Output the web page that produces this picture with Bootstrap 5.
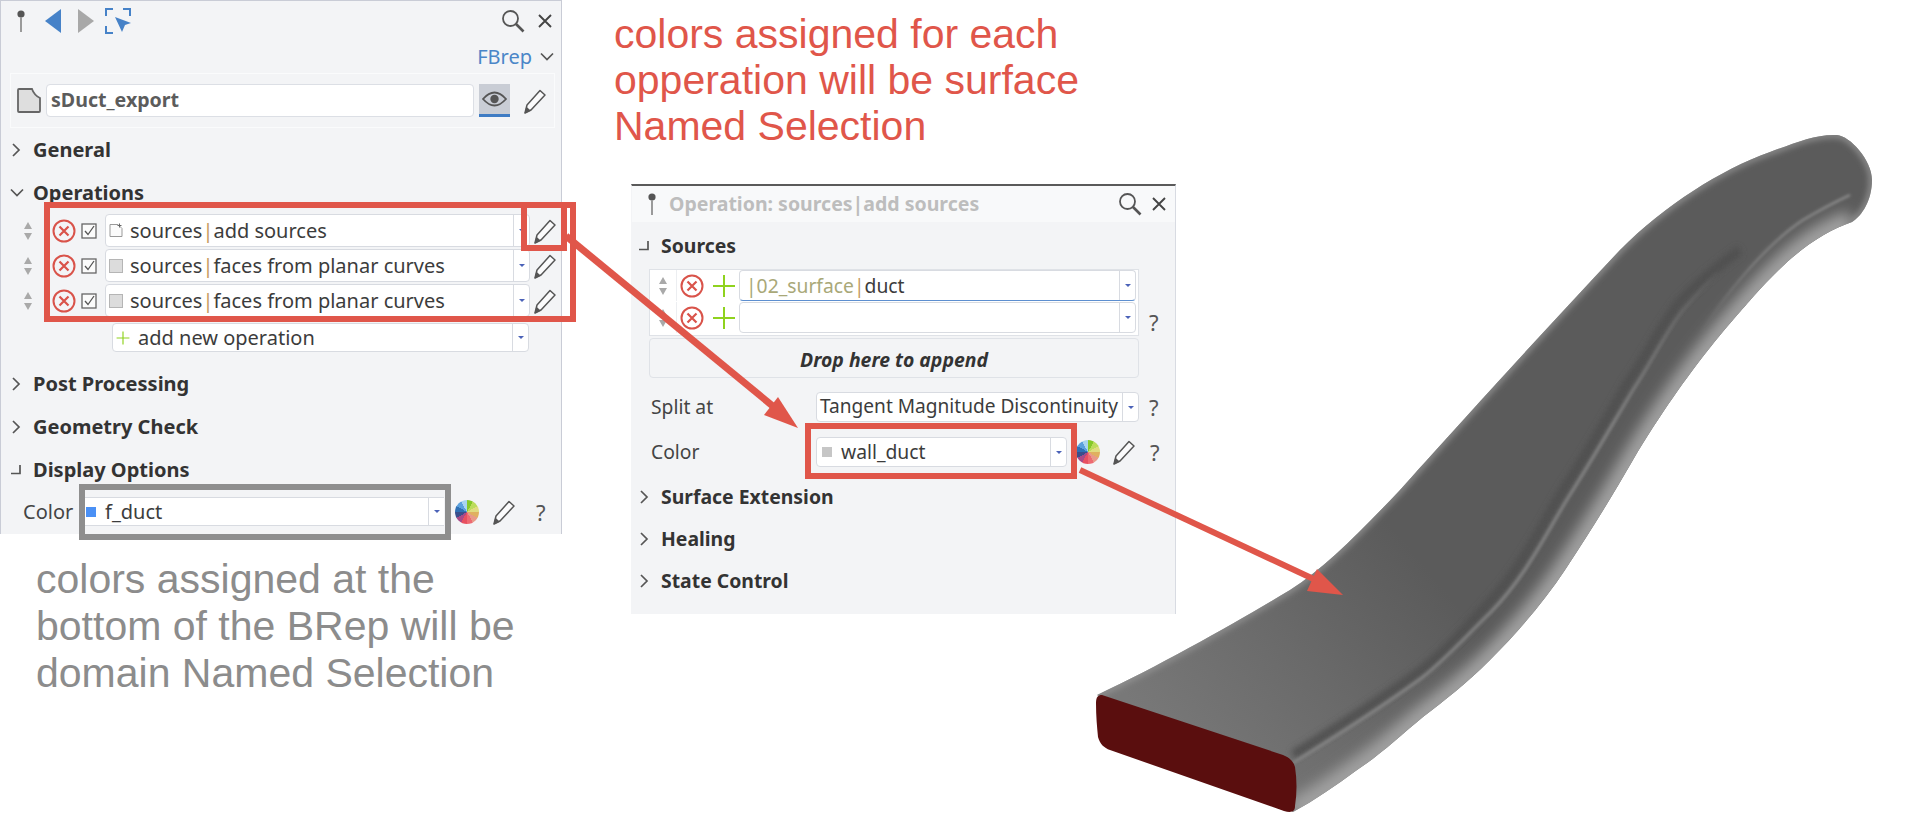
<!DOCTYPE html>
<html lang="en">
  <head>
    <meta charset="UTF-8" />
    <title>Named Selection colors</title>
    <link href="https://cdn.jsdelivr.net/npm/bootstrap@5.3.0/dist/css/bootstrap.min.css" rel="stylesheet" />
    <script src="https://cdn.jsdelivr.net/npm/bootstrap@5.3.0/dist/js/bootstrap.bundle.min.js"></script>
    <style>
      body { background: #fff; overflow: hidden; font-family: "Noto Sans", sans-serif; color: #3c3c3c; }
      .canvas { position: relative; width: 1925px; height: 836px; overflow: hidden; }
      .prop-panel { background: #f3f4f6; border-left: 1px solid #c9ccd6; border-right: 1px solid #c9ccd6; }
      .panel-left { position: absolute; left: 0; top: 0; width: 562px; height: 534px; border-top: 1px solid #c9ccd6; }
      .panel-right { position: absolute; left: 631px; top: 184px; width: 545px; height: 430px; border-top: 2px solid #5a5a5a; border-left-color: #f3f4f6; border-right-color: #d8dbe2; }

      .tool-row { height: 39px; padding: 0 8px 0 13px; }
      .type-row { height: 33px; padding-right: 7px; color: #4a86c8; font-size: 20px; }
      .name-box { height: 55px; margin: 0 6px 0 9px; border: 1px solid #fafbfc; padding: 0 0 0 6px; }
      .name-field { width: 428px; height: 33px; margin-left: 5px; padding: 0 0 0 4px; font-size: 19.6px; font-weight: 700; color: #5c5c5c; border: 1px solid #dcdfe5; border-radius: 4px; line-height: 30px; }
      .eye-btn { width: 31px; height: 33px; margin-left: 5px; background: #c9cdd5; border-bottom: 3px solid #3f7cc4; }
      .sec-head { height: 43px; padding-left: 9px; font-weight: 700; font-size: 20px; color: #333; }
      .sec-head svg { margin-right: 11px; }
      .panel-right .sec-head { height: 42px; padding-left: 6px; font-size: 19.4px; }
      .panel-right .sec-head svg { margin-right: 11px; }

      .op-row { height: 33px; margin-bottom: 2px; padding-left: 21px; }
      .combo { height: 100%; background: #fff; border: 1px solid #d8dbe1; border-radius: 4px; font-size: 20px; line-height: 1; }
      .panel-right .combo { font-size: 19.3px; }
      .panel-right .combo .split-text { font-size: 19.1px; padding-left: 3px; }
      .combo-text { flex: 1 1 auto; min-width: 0; padding-left: 3px; white-space: nowrap; }
      .combo-drop { flex: 0 0 16px; height: 100%; border-left: 1px solid #d8dbe1; }
      .combo-caret { width: 0; height: 0; border-left: 3px solid transparent; border-right: 3px solid transparent; border-top: 3px solid #4b62b8; }
      .sep { color: #c59a5e; }
      .swatch { width: 14px; height: 14px; background: #dcdcdc; border: 1px solid #b5b5b5; margin-right: 7px; }
      .sq-blue { width: 10px; height: 10px; background: #4a90f5; margin-right: 9px; }
      .sq-grey { width: 10px; height: 10px; background: #c6c6c6; margin-right: 9px; }
      .color-wheel { width: 24px; height: 24px; border-radius: 50%; background: conic-gradient(#85c92a 0 30deg, #bcdc5c 30deg 60deg, #e0dc80 60deg 90deg, #e0b060 90deg 120deg, #e89a88 120deg 150deg, #ee6a72 150deg 180deg, #e85060 180deg 210deg, #a84a88 210deg 240deg, #3a4f8c 240deg 270deg, #2f70b4 270deg 300deg, #5aa0dc 300deg 330deg, #a8d4ee 330deg 360deg); }
      .help-mark { font-size: 22px; color: #555; line-height: 1; }
      .field-label { font-size: 20px; color: #444; }
      .panel-right .field-label { font-size: 19.3px; }

      .panel-head { height: 36px; background: #f8f9fa; padding: 0 8px 0 13px; color: #bdbdbd; font-weight: 700; font-size: 19.5px; }
      .src-list { width: 490px; height: 67px; margin: 2px 0 0 17px; background: #fff; border: 1px solid #dfe2e7; }
      .src-row { height: 31px; margin-bottom: 1px; }
      .spin-cell { width: 27px; height: 100%; border-right: 1px solid #eceef1; }
      .drop-box { width: 490px; height: 40px; margin: 2px 0 0 17px; padding-top: 3px; border: 1px solid #dfe2e7; border-radius: 4px; font-weight: 700; font-style: italic; font-size: 19.4px; color: #333; }
      .field-row { height: 30px; padding-left: 19px; }
      .float-note { position: absolute; font-family: "Liberation Sans", Arial, sans-serif; font-size: 41px; white-space: nowrap; }
      .note-red { left: 614px; top: 11px; line-height: 46px; color: #e0564a; }
      .note-grey { left: 36px; top: 556px; line-height: 47px; color: #8c8c8c; }
      .duct-shape { position: absolute; left: 1060px; top: 110px; }
      .mark-layer { position: absolute; left: 0; top: 0; pointer-events: none; }
    </style>
  </head>
  <body>
    <svg class="d-none">
      <symbol id="i-pin" viewBox="0 0 14 24"><circle cx="7" cy="5" r="3.6" fill="#555"/><rect x="6" y="8" width="2" height="15" fill="#9a9a9a"/></symbol>
      <symbol id="i-search" viewBox="0 0 26 26"><circle cx="10.5" cy="10.5" r="7.5" fill="none" stroke="#555" stroke-width="1.8"/><path d="M16 16l7.5 7.5" stroke="#555" stroke-width="2.6"/></symbol>
      <symbol id="i-x" viewBox="0 0 16 16"><path d="M2 2l12 12M14 2L2 14" stroke="#444" stroke-width="1.9"/></symbol>
      <symbol id="i-pencil" viewBox="0 0 24 26"><path d="M2 25l2-8L17 2.500l5 4.500L8 22z" fill="#fbfbfc" stroke="#555" stroke-width="1.500" stroke-linejoin="round"/><path d="M1.500 25.500l1.800-7 4.500 4.200z" fill="#555"/></symbol>
      <symbol id="i-close" viewBox="0 0 24 24"><circle cx="12" cy="12" r="10.500" fill="none" stroke="#d9534a" stroke-width="2"/><path d="M7.500 7.500l9 9M16.500 7.500l-9 9" stroke="#d9534a" stroke-width="2.200"/></symbol>
      <symbol id="i-spin" viewBox="0 0 10 18"><path d="M5 0l4 7H1zM5 18l-4-7h8z" fill="#a9a9a9"/></symbol>
      <symbol id="i-check" viewBox="0 0 16 16"><rect x="1" y="1" width="14" height="14" fill="#fbfbfb" stroke="#666" stroke-width="1.300"/><path d="M4 8l3 3.500L13 3" fill="none" stroke="#555" stroke-width="1.300"/></symbol>
      <symbol id="i-plus" viewBox="0 0 24 24"><path d="M12 1v22M1 12h22" stroke="#8fd21e" stroke-width="2"/></symbol>
      <symbol id="i-right" viewBox="0 0 12 16"><path d="M3 2l6 6-6 6" fill="none" stroke="#555" stroke-width="1.700"/></symbol>
      <symbol id="i-down" viewBox="0 0 14 12"><path d="M1 2.500l6 6 6-6" fill="none" stroke="#555" stroke-width="1.700"/></symbol>
      <symbol id="i-open" viewBox="0 0 12 16"><path d="M1 11.500h9V3" fill="none" stroke="#555" stroke-width="1.700"/></symbol>
      <symbol id="i-new" viewBox="0 0 14 14"><path d="M1 1h8l4 4v8H1z" fill="#fbfbfb" stroke="#999"/><path d="M10.500 0v4M8.500 2h4" stroke="#666"/></symbol>
    </svg>

    <div class="canvas">
      <!-- left panel -->
      <div class="prop-panel panel-left d-flex flex-column">
        <div class="tool-row d-flex align-items-center">
          <svg width="14" height="24"><use href="#i-pin"/></svg>
          <svg class="ms-3" width="18" height="26" viewBox="0 0 18 26"><path d="M17 1v24L1 13z" fill="#4682c8"/></svg>
          <svg width="18" height="26" viewBox="0 0 18 26" style="margin-left:15px"><path d="M1 1v24l16-12z" fill="#a8a8a8"/></svg>
          <svg width="26" height="26" viewBox="0 0 26 26" style="margin-left:10px"><path d="M1 8V1h7M18 1h7v7M1 18v7h7" fill="none" stroke="#4682c8" stroke-width="2"/><path d="M10 9l16 6-6 2-3 7z" fill="#4682c8"/></svg>
          <svg class="ms-auto" width="26" height="26"><use href="#i-search"/></svg>
          <svg width="16" height="16" style="margin-left:11px"><use href="#i-x"/></svg>
        </div>
        <div class="type-row d-flex align-items-center justify-content-end">
          <span>FBrep</span>
          <svg class="ms-2" width="14" height="12"><use href="#i-down"/></svg>
        </div>
        <div class="name-box d-flex align-items-center">
          <svg width="24" height="25" viewBox="0 0 24 25"><path d="M2 1h13q2 6 8 9v13q0 1-1 1H2q-1 0-1-1V2q0-1 1-1z" fill="#dedede" stroke="#666" stroke-width="1.800"/></svg>
          <div class="name-field form-control">sDuct_export</div>
          <div class="eye-btn d-flex align-items-center justify-content-center">
            <svg width="25" height="16" viewBox="0 0 25 16"><path d="M1 8q11.500-13 23 0q-11.500 13-23 0z" fill="none" stroke="#555" stroke-width="1.800"/><circle cx="12.500" cy="8" r="4.200" fill="#555"/></svg>
          </div>
          <svg class="ms-auto" width="24" height="26" style="margin-right:7px"><use href="#i-pencil"/></svg>
        </div>
        <div class="sec-head d-flex align-items-center"><svg width="12" height="16"><use href="#i-right"/></svg>General</div>
        <div class="sec-head d-flex align-items-center"><svg width="14" height="12" style="margin-right:9px"><use href="#i-down"/></svg>Operations</div>

        <div class="op-row d-flex align-items-center">
          <svg width="12" height="18"><use href="#i-spin"/></svg>
          <svg width="24" height="24" style="margin-left:18px"><use href="#i-close"/></svg>
          <svg width="16" height="16" style="margin-left:5px"><use href="#i-check"/></svg>
          <div class="combo d-flex align-items-center" style="width:425px;margin-left:8px">
            <div class="combo-text d-flex align-items-center"><svg width="14" height="15" style="margin-right:7px"><use href="#i-new"/></svg>sources<span class="sep">|</span>add sources</div>
            <div class="combo-drop d-flex align-items-center justify-content-center"><div class="combo-caret"></div></div>
          </div>
          <svg width="24" height="26" style="margin-left:3px"><use href="#i-pencil"/></svg>
        </div>
        <div class="op-row d-flex align-items-center">
          <svg width="12" height="18"><use href="#i-spin"/></svg>
          <svg width="24" height="24" style="margin-left:18px"><use href="#i-close"/></svg>
          <svg width="16" height="16" style="margin-left:5px"><use href="#i-check"/></svg>
          <div class="combo d-flex align-items-center" style="width:425px;margin-left:8px">
            <div class="combo-text d-flex align-items-center"><div class="swatch"></div>sources<span class="sep">|</span>faces from planar curves</div>
            <div class="combo-drop d-flex align-items-center justify-content-center"><div class="combo-caret"></div></div>
          </div>
          <svg width="24" height="26" style="margin-left:3px"><use href="#i-pencil"/></svg>
        </div>
        <div class="op-row d-flex align-items-center">
          <svg width="12" height="18"><use href="#i-spin"/></svg>
          <svg width="24" height="24" style="margin-left:18px"><use href="#i-close"/></svg>
          <svg width="16" height="16" style="margin-left:5px"><use href="#i-check"/></svg>
          <div class="combo d-flex align-items-center" style="width:425px;margin-left:8px">
            <div class="combo-text d-flex align-items-center"><div class="swatch"></div>sources<span class="sep">|</span>faces from planar curves</div>
            <div class="combo-drop d-flex align-items-center justify-content-center"><div class="combo-caret"></div></div>
          </div>
          <svg width="24" height="26" style="margin-left:3px"><use href="#i-pencil"/></svg>
        </div>
        <div class="combo d-flex align-items-center flex-shrink-0" style="width:417px;height:29px;margin:4px 0 10px 111px">
          <div class="combo-text d-flex align-items-center"><svg width="14" height="14" style="margin-right:8px"><use href="#i-plus"/></svg>add new operation</div>
          <div class="combo-drop d-flex align-items-center justify-content-center"><div class="combo-caret"></div></div>
        </div>

        <div class="sec-head d-flex align-items-center"><svg width="12" height="16"><use href="#i-right"/></svg>Post Processing</div>
        <div class="sec-head d-flex align-items-center"><svg width="12" height="16"><use href="#i-right"/></svg>Geometry Check</div>
        <div class="sec-head d-flex align-items-center"><svg width="12" height="16"><use href="#i-open"/></svg>Display Options</div>
        <div class="d-flex align-items-center" style="height:29px;margin-top:6px;padding-left:22px">
          <span class="field-label" style="width:62px">Color</span>
          <div class="combo d-flex align-items-center rounded-0 border-start-0 border-end-0" style="width:359px">
            <div class="combo-text d-flex align-items-center" style="padding-left:1px"><div class="sq-blue"></div>f_duct</div>
            <div class="combo-drop d-flex align-items-center justify-content-center"><div class="combo-caret"></div></div>
          </div>
          <div class="color-wheel flex-shrink-0" style="margin-left:11px"></div>
          <svg width="24" height="26" style="margin-left:13px"><use href="#i-pencil"/></svg>
          <span class="help-mark" style="margin-left:20px">?</span>
        </div>
      </div>

      <!-- right panel -->
      <div class="prop-panel panel-right d-flex flex-column">
        <div class="panel-head d-flex align-items-center">
          <svg width="14" height="24"><use href="#i-pin"/></svg>
          <span style="margin-left:10px">Operation: sources|add sources</span>
          <svg class="ms-auto" width="26" height="26"><use href="#i-search"/></svg>
          <svg class="ms-2" width="16" height="16"><use href="#i-x"/></svg>
        </div>
        <div class="sec-head d-flex align-items-center" style="margin-top:3px"><svg width="12" height="16"><use href="#i-open"/></svg>Sources</div>
        <div class="d-flex">
          <div class="src-list">
            <div class="src-row d-flex align-items-center">
              <div class="spin-cell d-flex align-items-center justify-content-center"><svg width="10" height="18"><use href="#i-spin"/></svg></div>
              <svg width="24" height="24" style="margin-left:3px"><use href="#i-close"/></svg>
              <svg width="24" height="24" style="margin-left:8px"><use href="#i-plus"/></svg>
              <div class="combo d-flex align-items-center" style="width:397px;margin-left:3px;border-bottom-color:#5d8fd0">
                <div class="combo-text" style="padding-left:6px"><span style="color:#a9a878">|02_surface</span><span class="sep">|</span>duct</div>
                <div class="combo-drop d-flex align-items-center justify-content-center"><div class="combo-caret"></div></div>
              </div>
            </div>
            <div class="src-row d-flex align-items-center">
              <div class="spin-cell d-flex align-items-center justify-content-center"><svg width="10" height="18"><use href="#i-spin"/></svg></div>
              <svg width="24" height="24" style="margin-left:3px"><use href="#i-close"/></svg>
              <svg width="24" height="24" style="margin-left:8px"><use href="#i-plus"/></svg>
              <div class="combo d-flex align-items-center" style="width:397px;margin-left:3px">
                <div class="combo-text"></div>
                <div class="combo-drop d-flex align-items-center justify-content-center"><div class="combo-caret"></div></div>
              </div>
            </div>
          </div>
          <span class="help-mark align-self-end" style="margin:0 0 3px 10px">?</span>
        </div>
        <div class="drop-box d-flex align-items-center justify-content-center">Drop here to append</div>
        <div class="field-row d-flex align-items-center" style="margin-top:14px">
          <span class="field-label" style="width:165px">Split at</span>
          <div class="combo d-flex align-items-center" style="width:323px">
            <div class="combo-text split-text">Tangent Magnitude Discontinuity</div>
            <div class="combo-drop d-flex align-items-center justify-content-center"><div class="combo-caret"></div></div>
          </div>
          <span class="help-mark" style="margin-left:10px">?</span>
        </div>
        <div class="field-row d-flex align-items-center" style="margin-top:15px">
          <span class="field-label" style="width:165px">Color</span>
          <div class="combo d-flex align-items-center" style="width:251px">
            <div class="combo-text d-flex align-items-center" style="padding-left:5px"><div class="sq-grey"></div>wall_duct</div>
            <div class="combo-drop d-flex align-items-center justify-content-center"><div class="combo-caret"></div></div>
          </div>
          <div class="color-wheel flex-shrink-0" style="margin-left:9px"></div>
          <svg width="24" height="26" style="margin-left:12px"><use href="#i-pencil"/></svg>
          <span class="help-mark" style="margin-left:14px">?</span>
        </div>
        <div class="sec-head d-flex align-items-center" style="margin-top:9px"><svg width="12" height="16"><use href="#i-right"/></svg>Surface Extension</div>
        <div class="sec-head d-flex align-items-center"><svg width="12" height="16"><use href="#i-right"/></svg>Healing</div>
        <div class="sec-head d-flex align-items-center"><svg width="12" height="16"><use href="#i-right"/></svg>State Control</div>
      </div>

      <!-- notes -->
      <div class="float-note note-red">colors assigned for each<br />opperation will be surface<br />Named Selection</div>
      <div class="float-note note-grey">colors assigned at the<br />bottom of the BRep will be<br />domain Named Selection</div>

      <!-- duct model -->
      <svg class="duct-shape" width="830" height="710" viewBox="1060 110 830 710">
        <defs>
          <linearGradient id="ductBase" gradientUnits="userSpaceOnUse" x1="1180" y1="760" x2="1420" y2="560">
            <stop offset="0" stop-color="#787878"/>
            <stop offset="0.5" stop-color="#6a6a6a"/>
            <stop offset="1" stop-color="#5b5b5b"/>
          </linearGradient>
          <linearGradient id="ridgeLow" gradientUnits="userSpaceOnUse" x1="1293" y1="763" x2="1730" y2="260">
            <stop offset="0" stop-color="#858585"/>
            <stop offset="0.7" stop-color="#858585"/>
            <stop offset="1" stop-color="#858585" stop-opacity="0"/>
          </linearGradient>
          <linearGradient id="ridgeHigh" gradientUnits="userSpaceOnUse" x1="1850" y1="195" x2="1700" y2="333">
            <stop offset="0" stop-color="#a4a4a4"/>
            <stop offset="0.6" stop-color="#a4a4a4" stop-opacity="0.7"/>
            <stop offset="1" stop-color="#a4a4a4" stop-opacity="0"/>
          </linearGradient>
          <filter id="blur8" x="-10%" y="-10%" width="120%" height="120%"><feGaussianBlur stdDeviation="7"/></filter>
          <filter id="blur3" x="-10%" y="-10%" width="120%" height="120%"><feGaussianBlur stdDeviation="3"/></filter>
          <filter id="blur1" x="-10%" y="-10%" width="120%" height="120%"><feGaussianBlur stdDeviation="1.500"/></filter>
          <clipPath id="ductClip"><path d="M1097 695C1165 663 1240 620 1290 590C1325 568 1360 532 1400 490C1450 434 1540 335 1620 250C1665 205 1720 170 1770 152C1795 143 1815 134 1837 135C1850 136 1872 160 1872 180C1872 200 1862 216 1852 222C1820 233 1790 255 1753 297C1735 318 1690 365 1633 460C1610 500 1590 532 1565 570C1545 600 1520 630 1490 660C1465 685 1445 700 1423 717C1400 736 1380 755 1357 770C1335 786 1315 800 1293 812Z"/></clipPath>
        </defs>
        <g clip-path="url(#ductClip)">
          <rect x="1060" y="110" width="830" height="710" fill="url(#ductBase)"/>
          <!-- lighter outer strip along the lower edge -->
          <path d="M1293 812C1315 800 1335 786 1357 770C1380 755 1400 736 1423 717C1445 700 1465 685 1490 660C1520 630 1545 600 1565 570C1590 532 1610 500 1633 460C1690 365 1735 318 1753 297C1790 255 1820 233 1852 222" fill="none" stroke="#a0a0a0" stroke-width="24" filter="url(#blur8)"/>
          <!-- dark band above the ridge -->
          <path d="M1293 755C1335 729 1385 697 1423 669C1450 647 1470 624 1487 605C1525 565 1545 518 1567 484C1590 449 1610 414 1627 384C1645 359 1660 327 1678 304C1695 285 1715 268 1740 250" fill="none" stroke="#4f4f4f" stroke-width="9" filter="url(#blur3)"/>
          <!-- ridge lines -->
          <path d="M1293 763C1335 737 1385 705 1423 677C1450 655 1470 632 1490 613C1530 572 1550 525 1573 490C1595 455 1615 420 1633 390C1650 365 1665 333 1683 310C1695 296 1705 285 1717 273" fill="none" stroke="url(#ridgeLow)" stroke-width="3" filter="url(#blur1)"/>
          <path d="M1700 333C1725 295 1765 245 1803 220C1820 210 1835 202 1850 195" fill="none" stroke="url(#ridgeHigh)" stroke-width="1.500" filter="url(#blur1)"/>
          <!-- soft light along the top edge and the end rim -->
          <path d="M1097 695C1165 663 1240 620 1290 590C1325 568 1360 532 1400 490C1450 434 1540 335 1620 250C1665 205 1720 170 1770 152C1795 143 1815 134 1837 135C1850 136 1872 160 1872 180C1872 200 1862 216 1852 222" fill="none" stroke="#989898" stroke-width="5" filter="url(#blur3)"/>
        </g>
        <path d="M1102 695C1098 695 1096 697 1096 703C1096 716 1097 727 1098 737C1100 744 1104 748 1110 750L1284 811C1291 813 1295 812 1295 806C1297 793 1297 780 1295 767C1293 760 1288 757 1283 755Z" fill="#5a0e0e"/>
      </svg>

      <!-- annotation boxes and arrows -->
      <svg class="mark-layer" width="1925" height="836">
        <rect x="47" y="205" width="526" height="114" fill="none" stroke="#e0564a" stroke-width="6"/>
        <rect x="524" y="205" width="40" height="43" fill="none" stroke="#e0564a" stroke-width="6"/>
        <rect x="808" y="426" width="266" height="50" fill="none" stroke="#e0564a" stroke-width="6"/>
        <rect x="82" y="487" width="366" height="50" fill="none" stroke="#8e8e8e" stroke-width="6"/>
        <path d="M566 236L780 412" stroke="#e0564a" stroke-width="7"/>
        <path d="M798 428L778 397L764 415Z" fill="#e0564a"/>
        <path d="M1080 470L1320 582" stroke="#e0564a" stroke-width="6"/>
        <path d="M1343 595L1317 569L1307 591Z" fill="#e0564a"/>
      </svg>
    </div>
  </body>
</html>
